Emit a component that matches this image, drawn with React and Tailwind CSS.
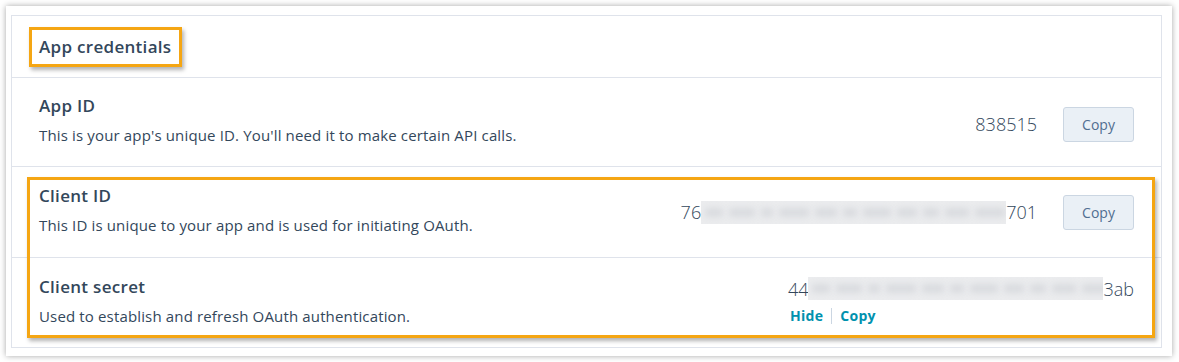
const font = { fontFamily: "'Open Sans', 'Noto Sans', sans-serif" };

const CopyButton = () => (
	<button className="w-[71px] h-[35px] rounded-[3px] border border-[#cbd6e2] bg-[#eaf0f6] text-[14px] text-[#506e91]">
		Copy
	</button>
);

const blobs = [18, 26, 12, 30, 22, 14, 28, 20, 16, 24, 30, 18, 22, 26];

const Masked = ({ head, tail, width }) => (
	<span className="inline-flex items-center">
		<span>{head}</span>
		<span className="h-[23px] bg-[#ebecee] overflow-hidden flex items-center gap-[6px] px-[4px]" style={{ width }}>
			{blobs.map((w, i) => (
				<span key={i} className="shrink-0 h-[9px] rounded-[3px] bg-[#d9dbdf] blur-[3px]" style={{ width: w }}></span>
			))}
		</span>
		<span>{tail}</span>
	</span>
);

export default function App() {
	return (
		<div className="w-[1179px] h-[362px] bg-white pt-[6px] pl-[6px] pr-[7px] pb-[6px] text-[#33475b]" style={font}>
			<div className="h-full bg-white shadow-[0_0_6px_rgba(0,0,0,0.35)] pt-[9px] pl-[5px] pr-[10px] pb-[8px]">
				<div className="border border-[#dfe3eb]">
					{/* Header */}
					<div className="h-[62px] flex items-center border-b border-[#dfe3eb] pl-[17px]">
						<div className="border-[3px] border-[#f5a613] px-[7px] h-[40px] w-[153px] flex items-center shadow-[2px_3px_4px_rgba(0,0,0,0.3)]">
							<h2 className="text-[17px] font-semibold tracking-[0.3px] whitespace-nowrap">App credentials</h2>
						</div>
					</div>

					{/* App ID */}
					<div className="h-[89px] flex justify-between border-b border-[#dfe3eb] pl-[27px] pr-[27px]">
						<div className="pt-[17px]">
							<h3 className="text-[17px] font-semibold tracking-[0.3px] leading-[22px]">App ID</h3>
							<p className="mt-[8px] text-[15px] tracking-[0.15px] leading-[20px]">This is your app's unique ID. You'll need it to make certain API calls.</p>
						</div>
						<div className="flex items-center gap-[26px] pt-[4px]">
							<span className="text-[18px] font-light">838515</span>
							<CopyButton />
						</div>
					</div>

					{/* Client rows */}
					<div className="relative">
						<div className="h-[91px] flex justify-between border-b border-[#dfe3eb] pl-[27px] pr-[27px]">
							<div className="pt-[18px]">
								<h3 className="text-[17px] font-semibold tracking-[0.3px] leading-[22px]">Client ID</h3>
								<p className="mt-[8px] text-[15px] tracking-[0.15px] leading-[20px]">This ID is unique to your app and is used for initiating OAuth.</p>
							</div>
							<div className="flex items-center gap-[26px]">
								<span className="text-[18px] font-light">
									<Masked head="76" tail="701" width={305} />
								</span>
								<CopyButton />
							</div>
						</div>
						<div className="h-[89px] flex justify-between pl-[27px] pr-[27px]">
							<div className="pt-[18px]">
								<h3 className="text-[17px] font-semibold tracking-[0.3px] leading-[22px]">Client secret</h3>
								<p className="mt-[8px] text-[15px] tracking-[0.15px] leading-[20px]">Used to establish and refresh OAuth authentication.</p>
							</div>
							<div className="pt-[19px]">
								<div className="text-[18px] font-light leading-[22px]">
									<Masked head="44" tail="3ab" width={295} />
								</div>
								<div className="mt-[6px] flex items-center text-[14px] font-bold tracking-[0.3px] text-[#0091ae] leading-[20px] pl-[2px]">
									<span>Hide</span>
									<span className="mx-[8px] h-[16px] w-px bg-[#cbd6e2]"></span>
									<span>Copy</span>
								</div>
							</div>
						</div>
						{/* Highlight */}
						<div className="absolute left-[15px] right-[6px] top-[10px] bottom-[9px] border-[3px] border-[#f5a613] shadow-[2px_3px_4px_rgba(0,0,0,0.3)] pointer-events-none"></div>
					</div>
				</div>
			</div>
		</div>
	);
}
